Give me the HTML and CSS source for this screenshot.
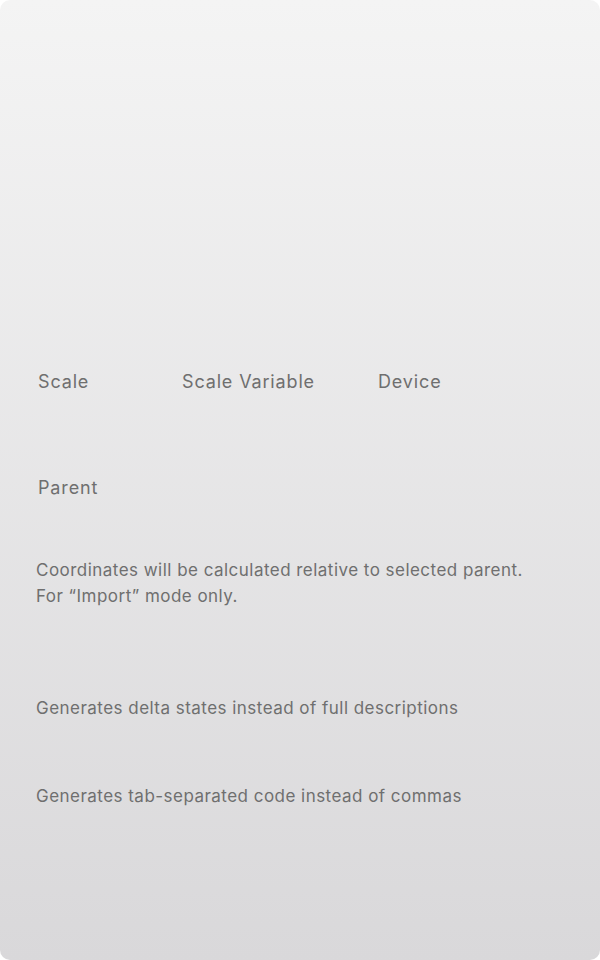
FILE: index.html
```html
<!DOCTYPE html>
<html>
<head>
<meta charset="utf-8">
<link rel="stylesheet" href="styles.css">
</head>
<body>
<div class="panel">
  <div class="labels">
    <span class="label">Scale</span>
    <span class="label">Scale Variable</span>
    <span class="label">Device</span>
  </div>
  <div class="parent">
    <span class="label">Parent</span>
  </div>
  <p class="desc first">Coordinates will be calculated relative to selected parent.<br>For “Import” mode only.</p>
  <p class="desc second">Generates delta states instead of full descriptions</p>
  <p class="desc third">Generates tab-separated code instead of commas</p>
</div>
</body>
</html>
```
FILE: styles.css
```css
html, body {
  margin: 0;
  padding: 0;
  background: #ffffff;
}
.panel {
  width: 600px;
  height: 960px;
  box-sizing: border-box;
  border-radius: 10px;
  background: linear-gradient(to bottom, #f4f4f4 0%, #d9d8da 100%);
  font-family: Inter, "Noto Sans", sans-serif;
  color: #6f6f6f;
  padding-top: 371px;
  overflow: hidden;
}
.labels {
  display: grid;
  grid-template-columns: 144px 196px auto;
  padding-left: 38px;
}
.label {
  font-size: 18px;
  line-height: 22px;
  letter-spacing: 0.85px;
  display: block;
}
.parent {
  padding-left: 38px;
  margin-top: 84px;
}
.desc {
  margin: 0;
  padding-left: 36px;
  font-size: 17px;
  line-height: 26px;
  letter-spacing: 0.47px;
}
.first {
  margin-top: 58px;
}
.second {
  margin-top: 86px;
}
.third {
  margin-top: 62px;
}
```
